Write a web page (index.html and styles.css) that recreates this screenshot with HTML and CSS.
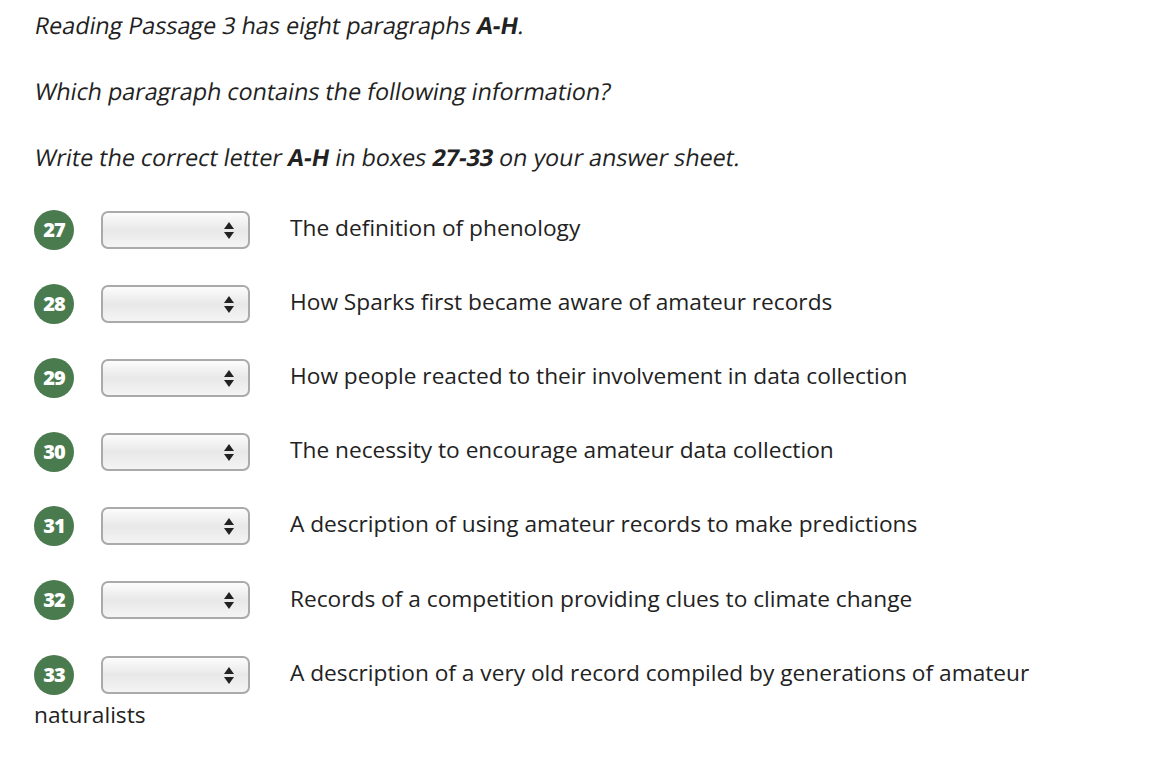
FILE: index.html
```html
<!DOCTYPE html>
<html lang="en">
<head>
<meta charset="UTF-8" />
<title>Reading Passage 3</title>
<link rel="stylesheet" href="styles.css">
</head>
<body>

<p class="instr"><span class="slant">Reading Passage 3 has eight paragraphs <b>A-H</b>.</span></p>
<p class="instr"><span class="slant">Which paragraph contains the following information?</span></p>
<p class="instr"><span class="slant">Write the correct letter <b>A-H</b> in boxes <b>27-33</b> on your answer sheet.</span></p>

<div class="questions">
  <p class="q"><span class="num">27</span><span class="pick"></span>The definition of phenology</p>
  <p class="q"><span class="num">28</span><span class="pick"></span>How Sparks first became aware of amateur records</p>
  <p class="q"><span class="num">29</span><span class="pick"></span>How people reacted to their involvement in data collection</p>
  <p class="q"><span class="num">30</span><span class="pick"></span>The necessity to encourage amateur data collection</p>
  <p class="q"><span class="num">31</span><span class="pick"></span>A description of using amateur records to make predictions</p>
  <p class="q"><span class="num">32</span><span class="pick"></span>Records of a competition providing clues to climate change</p>
  <p class="q"><span class="num">33</span><span class="pick"></span>A description of a very old record compiled by generations of amateur naturalists</p>
</div>

</body>
</html>
```

FILE: styles.css
```css
body {
  font-family: "Open Sans", "Noto Sans", sans-serif;
  font-size: 22.7px;
  color: #222;
  background: #fff;
  margin: 0;
  padding: 10px 34px;
  width: 1080px;
}
.instr {
  margin: 0 0 36px;
  font-size: 23.3px;
  line-height: 30px;
}
.slant {
  display: inline-block;
  transform: skewX(-10deg);
  transform-origin: 0 75%;
}
.instr b {
  font-weight: 700;
}
.questions {
  margin-top: 2px;
}
.q {
  margin: 0 0 32.2px;
  line-height: 40px;
}
.num {
  display: inline-flex;
  align-items: center;
  justify-content: center;
  vertical-align: middle;
  width: 40px;
  height: 40px;
  border-radius: 50%;
  background: #4a7b4e;
  color: #fff;
  font-weight: 800;
  font-size: 20px;
  letter-spacing: -1px;
  line-height: 1;
  margin-right: 27px;
}
.pick {
  display: inline-block;
  vertical-align: middle;
  position: relative;
  width: 145px;
  height: 34px;
  border: 2px solid #aaa;
  border-radius: 7px;
  background: linear-gradient(#fcfcfc, #e8e8e8 50%, #f4f4f4);
  margin-right: 40px;
}
.pick::before,
.pick::after {
  content: "";
  position: absolute;
  right: 14px;
  border-left: 5px solid transparent;
  border-right: 5px solid transparent;
}
.pick::before {
  top: 9px;
  border-bottom: 7px solid #222;
}
.pick::after {
  top: 19px;
  border-top: 7px solid #222;
}
```
